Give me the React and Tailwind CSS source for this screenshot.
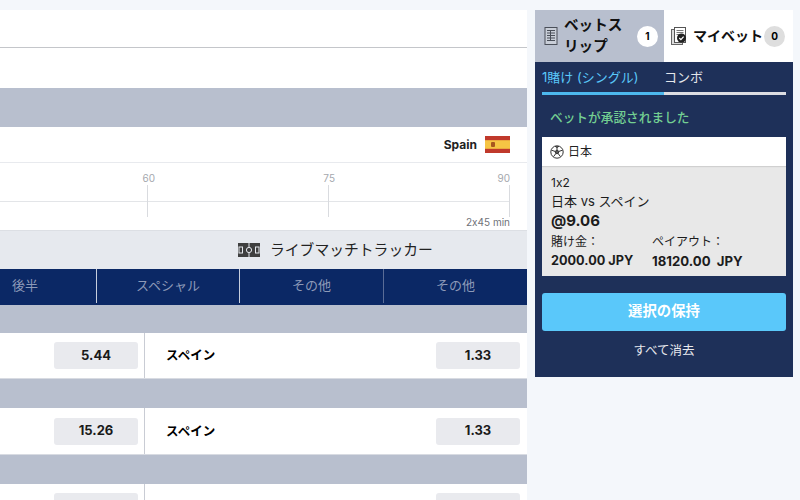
const fontStack = { fontFamily: '"Inter", "Noto Sans CJK JP", sans-serif' };

const SlipIcon = () => (
  <svg width="14" height="18" viewBox="0 0 14 18" fill="none" stroke="#4a4f59" strokeWidth="1">
    <rect x="1" y="0.5" width="12" height="17" fill="#c9ced8" />
    <path d="M3 3.5h8M3 6h8M3 8.5h8M3 11h8M3 13.5h8M6.5 3.5v10" />
  </svg>
);

const MyBetIcon = () => (
  <svg width="17" height="18" viewBox="0 0 17 18" fill="none">
    <rect x="0.5" y="2.5" width="11" height="15" fill="#ddd" stroke="#666" />
    <rect x="3.5" y="0.5" width="11" height="15" fill="#fff" stroke="#555" />
    <path d="M5.5 3.5h7M5.5 5.5h7M5.5 7.5h3" stroke="#777" />
    <circle cx="10.5" cy="11" r="4.5" fill="#222" />
    <path d="M8.3 11l1.6 1.6 2.7-3" stroke="#fff" strokeWidth="1.2" />
  </svg>
);

const PitchIcon = () => (
  <svg width="22" height="14" viewBox="0 0 22 14">
    <rect width="22" height="14" fill="#3f3f3f" />
    <path d="M11 0v14" stroke="#e6e9ee" />
    <rect x="1" y="4" width="3.5" height="6" fill="none" stroke="#e6e9ee" />
    <rect x="17.5" y="4" width="3.5" height="6" fill="none" stroke="#e6e9ee" />
    <circle cx="11" cy="7" r="2.6" fill="#3f3f3f" stroke="#e6e9ee" />
  </svg>
);

const SpainFlag = () => (
  <svg width="25" height="17" viewBox="0 0 25 17">
    <rect width="25" height="17" fill="#c0392b" />
    <rect y="4.2" width="25" height="8.6" fill="#f6c544" />
    <rect x="6" y="6" width="4" height="5" rx="1" fill="#a8561f" />
  </svg>
);

const BallIcon = () => (
  <svg width="14" height="14" viewBox="0 0 14 14" fill="none" stroke="#333" strokeWidth="1">
    <circle cx="7" cy="7" r="6.2" />
    <path d="M7 5l1.9 1.4-.7 2.2H5.8l-.7-2.2z" fill="#555" />
    <path d="M7 1v4M8.9 6.4l3.6-1.2M8.2 8.6l2.2 3M5.8 8.6l-2.2 3M5.1 6.4L1.5 5.2" />
    <path d="M5 1.3L7 2.4l2-1.1" fill="#555" />
  </svg>
);

const GrayBand = ({ height }) => <div className={`bg-[#b8bfce] ${height}`}></div>;

const OddsRow = ({ left, right, height, showLabel = true }) => (
  <div className={`flex items-center bg-white border-b border-[#d8dbe2] ${height}`}>
    <div className="flex w-[145px] h-full shrink-0 items-center justify-end border-r border-[#c9ccd4] pr-[6px]">
      <div className="flex h-[27px] w-[84px] items-center justify-center rounded-[3px] bg-[#e9eaee] text-[13px] font-bold text-[#1a1a1a]">
        {left}
      </div>
    </div>
    <div className="flex flex-1 items-center justify-between pl-[21px] pr-[7px]">
      <span className="pt-[2px] text-[12.5px] font-bold text-black">{showLabel ? "スペイン" : ""}</span>
      <div className="flex h-[27px] w-[84px] items-center justify-center rounded-[3px] bg-[#e9eaee] text-[13px] font-bold text-[#1a1a1a]">
        {right}
      </div>
    </div>
  </div>
);

const Timeline = () => (
  <div className="h-[69px] bg-white border-b border-[#dcdfe4] border-t border-t-[#e8eaee]">
    <div className="flex h-[22px] items-end text-[10px] leading-[14px] text-[#a5a8ae]">
      <div className="w-[155px] text-right">60</div>
      <div className="w-[180px] text-right">75</div>
      <div className="w-[175px] text-right">90</div>
    </div>
    <div className="flex">
      <div className="h-[32px] w-[148px] border-r border-[#d9dbdf]">
        <div className="h-[17px] border-b border-[#e3e5e8]"></div>
      </div>
      <div className="h-[32px] w-[181px] border-r border-[#d9dbdf]">
        <div className="h-[17px] border-b border-[#e3e5e8]"></div>
      </div>
      <div className="h-[32px] w-[181px] border-r border-[#d9dbdf]">
        <div className="h-[17px] border-b border-[#e3e5e8]"></div>
      </div>
    </div>
    <div className="w-[510px] text-right text-[10px] leading-[10px] text-[#6f7278]">2x45 min</div>
  </div>
);

const MainPanel = () => (
  <div className="w-[527px] shrink-0">
    <div className="h-[38px] bg-white border-b border-[#c4c6ca]"></div>
    <div className="h-[40px] bg-white"></div>
    <GrayBand height="h-[39px]" />
    <div className="flex h-[35px] items-center justify-end bg-white pr-[17px]">
      <span className="mr-[8px] text-[12px] font-bold text-[#222]">Spain</span>
      <SpainFlag />
    </div>
    <Timeline />
    <div className="flex h-[38px] items-center bg-[#e6e9ee] pl-[238px]">
      <PitchIcon />
      <span className="ml-[10px] text-[14.8px] text-[#222]">ライブマッチトラッカー</span>
    </div>
    <div className="flex h-[36px] bg-[#0b2865] pb-[2px] text-[13px] text-[#8d9ab8]">
      <div className="flex w-[97px] items-center border-r border-[#c7cedd] pl-3">後半</div>
      <div className="flex w-[143px] items-center justify-center border-r border-[#c7cedd]">スペシャル</div>
      <div className="flex w-[144px] items-center justify-center border-r border-[#5a6c96]">その他</div>
      <div className="flex w-[143px] items-center justify-center">その他</div>
    </div>
    <GrayBand height="h-[28px]" />
    <OddsRow left="5.44" right="1.33" height="h-[46px]" />
    <GrayBand height="h-[29px]" />
    <OddsRow left="15.26" right="1.33" height="h-[47px]" />
    <GrayBand height="h-[29px]" />
    {/* last row runs past the bottom of the window, only the tops of the buttons show */}
    <OddsRow left="" right="" height="h-[46px]" showLabel={false} />
  </div>
);

const BetSlip = () => (
  <div className="w-[258px] shrink-0">
    <div className="flex h-[52px]">
      <div className="flex w-[129px] items-center bg-[#b8bfce] pl-[9px]">
        <SlipIcon />
        <span className="ml-[6px] w-[68px] pb-[1px] text-[14.6px] font-bold leading-[21px] text-[#111]">ベットスリップ</span>
        <span className="ml-[5px] flex h-[21px] w-[21px] items-center justify-center rounded-full bg-white text-[10px] font-bold text-black">1</span>
      </div>
      <div className="flex w-[129px] items-center bg-white pl-[7px]">
        <MyBetIcon />
        <span className="ml-[5px] whitespace-nowrap pb-[2px] text-[14px] font-bold text-[#111]">マイベット</span>
        <span className="ml-[1px] flex h-[21px] w-[21px] items-center justify-center rounded-full bg-[#dedede] text-[10px] font-bold text-black">0</span>
      </div>
    </div>
    <div className="h-[315px] bg-[#1e3059] px-[7px]">
      <div className="flex h-[30px] items-center pt-[2px] text-[13px]">
        <span className="w-[122px] text-[#5ac8fa]">1賭け (シングル)</span>
        <span className="text-[#e4e6ea]">コンボ</span>
      </div>
      <div className="flex h-[3px]">
        <div className="w-[122px] bg-[#4db8ee]"></div>
        <div className="flex-1 bg-[#dcdde2]"></div>
      </div>
      <div className="mt-[14px] pl-[8px] text-[12.7px] font-medium leading-[18px] text-[#73cf92]">ベットが承認されました</div>
      <div className="mt-[10px] h-[139px] bg-[#e8e8e8]">
        <div className="flex h-[29px] items-center bg-white pl-[8px] text-[12px] text-[#222] shadow-[0_1px_1px_rgba(0,0,0,0.1)]">
          <BallIcon />
          <span className="ml-[4px]">日本</span>
        </div>
        <div className="px-[9px] pt-[8px] text-[#1c1c1c]">
          <div className="text-[12px] leading-[18px]">1x2</div>
          <div className="text-[13px] leading-[18px]">日本 vs スペイン</div>
          <div className="text-[15px] font-bold leading-[22px]">@9.06</div>
          <div className="flex pt-[1px] text-[12px] leading-[18px]">
            <span className="w-[101px]">賭け金：</span>
            <span>ペイアウト：</span>
          </div>
          <div className="flex pt-[1px] font-bold leading-[18px]">
            <span className="w-[101px] text-[12.7px]">2000.00 JPY</span>
            <span className="whitespace-pre text-[13.2px]">18120.00  JPY</span>
          </div>
        </div>
      </div>
      <div className="mt-[17px] flex h-[38px] items-center justify-center rounded-[3px] bg-[#5ac8fa] pb-[3px] text-[14.4px] font-bold text-white">選択の保持</div>
      <div className="mt-[10px] text-center text-[12.5px] leading-[20px] text-[#e8e9ee]">すべて消去</div>
    </div>
  </div>
);

export default function App() {
  return (
    <div className="h-[500px] w-[800px] overflow-hidden bg-[#f4f7fb] pt-[10px] [font-feature-settings:'calt'_0]" style={fontStack}>
      <div className="flex gap-[8px]">
        <MainPanel />
        <BetSlip />
      </div>
    </div>
  );
}
